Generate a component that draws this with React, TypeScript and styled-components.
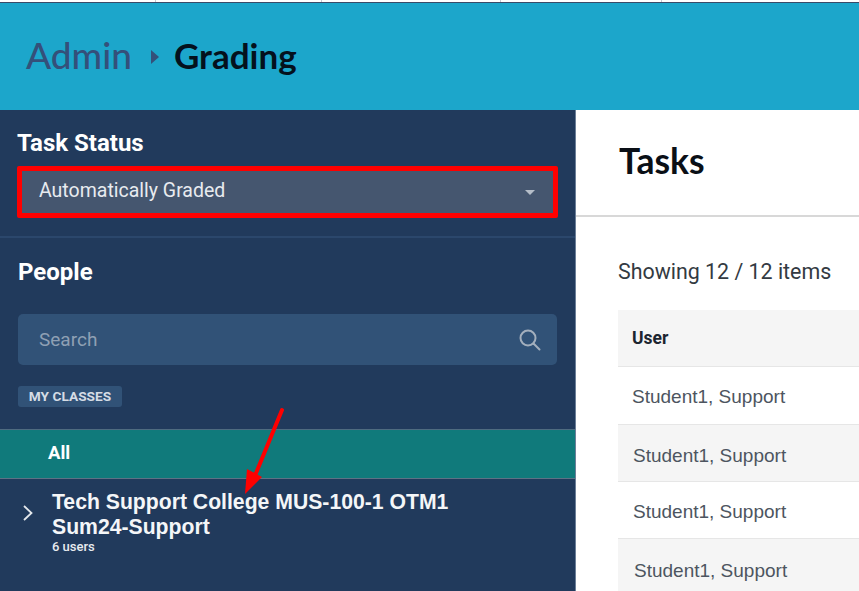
import styled, { createGlobalStyle } from "styled-components"

const GlobalStyle = createGlobalStyle`
  html, body {
    margin: 0;
    padding: 0;
    height: 100%;
    overflow: hidden;
    background: #ffffff;
  }
  * {
    box-sizing: border-box;
  }
`

const rows = [
  { name: "Student1, Support", indent: 14, height: 58, nudge: 1, shaded: false },
  { name: "Student1, Support", indent: 15, height: 57, nudge: 3, shaded: true },
  { name: "Student1, Support", indent: 15, height: 57, nudge: 2, shaded: false },
  { name: "Student1, Support", indent: 16, height: 53, nudge: 6, shaded: true },
]

const App = () => {
  return (
    <Page>
      <GlobalStyle />
      <TopStrip>
        <Tick $at={155} />
        <Tick $at={165} />
        <Tick $at={178} />
        <Tick $at={160} />
      </TopStrip>
      <Header>
        <Crumb>Admin</Crumb>
        <CrumbArrow />
        <CrumbCurrent>Grading</CrumbCurrent>
      </Header>
      <Body>
        <Sidebar>
          <StatusSection>
            <SectionTitle>Task Status</SectionTitle>
            <Select>
              <span>Automatically Graded</span>
              <Caret />
            </Select>
          </StatusSection>
          <PeopleSection>
            <SectionTitle>People</SectionTitle>
            <Search>
              <SearchText>Search</SearchText>
              <svg width="24" height="24" viewBox="0 0 24 24" fill="none" stroke="#a3afbd" strokeWidth="2" strokeLinecap="round">
                <circle cx="10" cy="10" r="7.5" />
                <path d="M15.5 15.5l6 6" />
              </svg>
            </Search>
            <Chip>MY CLASSES</Chip>
          </PeopleSection>
          <AllRow>All</AllRow>
          <ClassRow>
            <svg width="12" height="18" viewBox="0 0 12 18" fill="none" stroke="#e4e8ec" strokeWidth="1.8">
              <path d="M2 2l7.5 7L2 16" />
            </svg>
            <ClassInfo>
              <ClassName>Tech Support College MUS-100-1 OTM1 Sum24-Support</ClassName>
              <ClassCount>6 users</ClassCount>
            </ClassInfo>
          </ClassRow>
          <Arrow width="60" height="100" viewBox="0 0 60 100">
            <path d="M40 4L12 72" stroke="#ff0000" strokeWidth="4" strokeLinecap="round" />
            <path d="M3 88L5 63L20 71Z" fill="#ff0000" />
          </Arrow>
        </Sidebar>
        <Main>
          <TasksHead>
            <TasksTitle>Tasks</TasksTitle>
          </TasksHead>
          <TasksBody>
            <Showing>Showing 12 / 12 items</Showing>
            <HeadRow>User</HeadRow>
            {rows.map((row, index) => (
              <Row key={index} $shaded={row.shaded} $indent={row.indent} $height={row.height} $nudge={row.nudge}>
                {row.name}
              </Row>
            ))}
          </TasksBody>
        </Main>
      </Body>
    </Page>
  )
}

export default App

const Page = styled.div`
  width: 859px;
  height: 591px;
  overflow: hidden;
  display: flex;
  flex-direction: column;
  font-family: Roboto, "Liberation Sans", sans-serif;
`
const TopStrip = styled.div`
  height: 3px;
  flex-shrink: 0;
  background: #ffffff;
  border-bottom: 1px solid #3a4a68;
  display: flex;
`
const Tick = styled.div<{ $at: number }>`
  width: 1px;
  height: 2px;
  background: #c4c8d0;
  margin-left: ${(p) => p.$at}px;
`
const Header = styled.div`
  height: 107px;
  flex-shrink: 0;
  background: #1ca6cb;
  display: flex;
  align-items: center;
  padding: 0 0 4px 26px;
  font-family: Lato, "Open Sans", sans-serif;
`
const Crumb = styled.span`
  font-size: 37px;
  font-weight: 500;
  color: #34507a;
`
const CrumbArrow = styled.span`
  width: 0;
  height: 0;
  margin: 4px 15px 0 19px;
  border-left: 8px solid #34507a;
  border-top: 7px solid transparent;
  border-bottom: 7px solid transparent;
`
const CrumbCurrent = styled.span`
  font-size: 35px;
  font-weight: 700;
  color: #04111d;
`
const Body = styled.div`
  flex: 1;
  display: flex;
  min-height: 0;
`
const Sidebar = styled.div`
  position: relative;
  width: 576px;
  flex-shrink: 0;
  background: #213a5c;
  border-right: 1px solid #6c7f98;
  color: #ffffff;
`
const StatusSection = styled.div`
  height: 128px;
  padding: 20px 17px 0 17px;
  border-bottom: 2px solid #2b476c;
`
const SectionTitle = styled.div`
  font-size: 24px;
  line-height: 27px;
  font-weight: 700;
`
const Select = styled.div`
  margin-top: 9px;
  width: 541px;
  height: 52px;
  border: 5px solid #ff0000;
  border-radius: 2px;
  background: #45566f;
  padding: 0 18px 4px 17px;
  display: flex;
  align-items: center;
  justify-content: space-between;
  font-size: 19.5px;
  color: #e8ebef;
`
const Caret = styled.span`
  width: 0;
  height: 0;
  margin-top: 4px;
  border-left: 5px solid transparent;
  border-right: 5px solid transparent;
  border-top: 5px solid #b5bdc8;
`
const PeopleSection = styled.div`
  height: 191px;
  padding: 21px 18px 0 18px;
`
const Search = styled.div`
  margin-top: 28px;
  height: 51px;
  width: 539px;
  background: #315277;
  border-radius: 5px;
  padding: 0 15px 0 21px;
  display: flex;
  align-items: center;
  justify-content: space-between;
`
const SearchText = styled.span`
  font-size: 19px;
  color: #8fa0b4;
`
const Chip = styled.div`
  margin-top: 21px;
  width: 104px;
  height: 21px;
  border-radius: 3px;
  background: #315277;
  color: #d5dce5;
  font-size: 13.7px;
  font-weight: 700;
  line-height: 20px;
  text-align: center;
`
const AllRow = styled.div`
  height: 50px;
  background: #107a7b;
  border-top: 1px solid #4f6b80;
  border-bottom: 1px solid #5c7285;
  padding-left: 48px;
  font-size: 18.5px;
  font-weight: 700;
  line-height: 46px;
`
const ClassRow = styled.div`
  display: flex;
  align-items: flex-start;
  padding: 10px 0 0 22px;
  gap: 18px;

  svg {
    margin-top: 15px;
    flex-shrink: 0;
  }
`
const ClassInfo = styled.div`
  width: 420px;
`
const ClassName = styled.div`
  font-family: "Liberation Sans", Arial, sans-serif;
  font-size: 21.2px;
  line-height: 25px;
  font-weight: 700;
  color: #f4f6f8;
`
const ClassCount = styled.div`
  font-size: 13px;
  line-height: 15px;
  font-weight: 500;
  color: #e8ebef;
`
const Arrow = styled.svg`
  position: absolute;
  left: 242px;
  top: 296px;
`
const Main = styled.div`
  flex: 1;
  min-width: 0;
  background: #ffffff;
`
const TasksHead = styled.div`
  height: 107px;
  border-bottom: 2px solid #d8d8d8;
  padding: 28px 0 0 43px;
`
const TasksTitle = styled.div`
  font-family: Lato, "Open Sans", sans-serif;
  font-size: 35.5px;
  line-height: 46px;
  font-weight: 700;
  color: #0a0f16;
`
const TasksBody = styled.div`
  padding: 41px 0 0 42px;
`
const Showing = styled.div`
  font-size: 21.4px;
  line-height: 28px;
  color: #333a42;
  margin-bottom: 24px;
`
const HeadRow = styled.div`
  height: 57px;
  background: #f5f5f5;
  border-bottom: 1px solid #e6e6e6;
  padding-left: 14px;
  font-size: 17.5px;
  font-weight: 700;
  line-height: 56px;
  color: #1c2530;
`
const Row = styled.div<{ $shaded: boolean; $indent: number; $height: number; $nudge: number }>`
  height: ${(p) => p.$height}px;
  overflow: hidden;
  background: ${(p) => (p.$shaded ? "#f5f5f5" : "#ffffff")};
  border-bottom: 1px solid #e6e6e6;
  padding: ${(p) => p.$nudge}px 0 0 ${(p) => p.$indent}px;
  font-family: "Liberation Sans", Roboto, sans-serif;
  font-size: 19px;
  line-height: ${(p) => p.$height - 1}px;
  color: #4d5560;
`
